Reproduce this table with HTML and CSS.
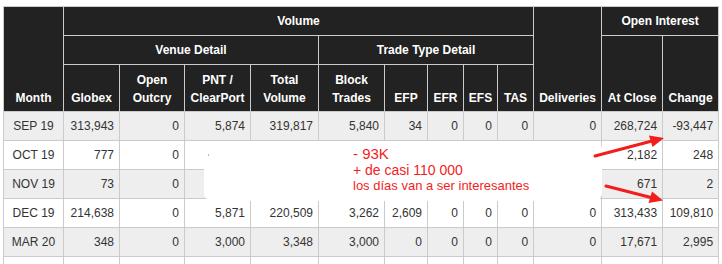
FILE: index.html
```html
<!DOCTYPE html>
<html lang="es">
<head>
<meta charset="utf-8">
<title>Volume / Open Interest</title>
<link rel="stylesheet" href="styles.css">
</head>
<body>
<div class="page">
  <table class="vol">
    <colgroup>
      <col class="c-month"><col class="c-globex"><col class="c-outcry"><col class="c-pnt"><col class="c-total">
      <col class="c-block"><col class="c-efp"><col class="c-efr"><col class="c-efs"><col class="c-tas">
      <col class="c-deliv"><col class="c-close"><col class="c-change">
    </colgroup>
    <thead>
      <tr class="h1">
        <th rowspan="3" class="bottom">Month</th>
        <th colspan="9">Volume</th>
        <th rowspan="3" class="bottom">Deliveries</th>
        <th colspan="2">Open Interest</th>
      </tr>
      <tr class="h2">
        <th colspan="4">Venue Detail</th>
        <th colspan="5">Trade Type Detail</th>
        <th rowspan="2" class="bottom">At Close</th>
        <th rowspan="2" class="bottom">Change</th>
      </tr>
      <tr class="h3">
        <th class="bottom">Globex</th>
        <th class="bottom">Open<br>Outcry</th>
        <th class="bottom">PNT /<br>ClearPort</th>
        <th class="bottom">Total<br>Volume</th>
        <th class="bottom">Block<br>Trades</th>
        <th class="bottom">EFP</th>
        <th class="bottom">EFR</th>
        <th class="bottom">EFS</th>
        <th class="bottom">TAS</th>
      </tr>
    </thead>
    <tbody>
      <tr class="alt">
        <td class="m">SEP 19</td><td>313,943</td><td>0</td><td>5,874</td><td>319,817</td><td>5,840</td><td>34</td><td>0</td><td>0</td><td>0</td><td>0</td><td>268,724</td><td>-93,447</td>
      </tr>
      <tr>
        <td class="m">OCT 19</td><td>777</td><td>0</td><td></td><td></td><td></td><td></td><td></td><td></td><td></td><td></td><td>2,182</td><td>248</td>
      </tr>
      <tr class="alt">
        <td class="m">NOV 19</td><td>73</td><td>0</td><td></td><td></td><td></td><td></td><td></td><td></td><td></td><td></td><td>671</td><td>2</td>
      </tr>
      <tr>
        <td class="m">DEC 19</td><td>214,638</td><td>0</td><td>5,871</td><td>220,509</td><td>3,262</td><td>2,609</td><td>0</td><td>0</td><td>0</td><td>0</td><td>313,433</td><td>109,810</td>
      </tr>
      <tr class="alt">
        <td class="m">MAR 20</td><td>348</td><td>0</td><td>3,000</td><td>3,348</td><td>3,000</td><td>0</td><td>0</td><td>0</td><td>0</td><td>0</td><td>17,671</td><td>2,995</td>
      </tr>
      <tr>
        <td class="m"></td><td></td><td></td><td></td><td></td><td></td><td></td><td></td><td></td><td></td><td></td><td></td><td></td>
      </tr>
    </tbody>
  </table>

  <div class="note">
    <span class="dot"></span>
    <div class="l1">- 93K</div>
    <div class="l2">+ de casi 110 000</div>
    <div class="l3">los días van a ser interesantes</div>
  </div>

  <svg class="arrows" width="722" height="264" viewBox="0 0 722 264" aria-hidden="true">
    <line x1="595" y1="156" x2="652" y2="141" stroke="#f21d1d" stroke-width="3" stroke-linecap="round"/>
    <polygon points="664,138 649,135.5 652.5,147" fill="#f21d1d"/>
    <line x1="606" y1="186" x2="651" y2="197.5" stroke="#f21d1d" stroke-width="3" stroke-linecap="round"/>
    <polygon points="663,200.5 652,191.5 648.5,203" fill="#f21d1d"/>
  </svg>
</div>
</body>
</html>
```

FILE: styles.css
```css
html, body {
  margin: 0;
  padding: 0;
  background: #fff;
}

.page {
  position: relative;
  width: 722px;
  height: 264px;
  overflow: hidden;
  padding: 6px 0 0 3px;
  box-sizing: border-box;
  font-family: "Liberation Sans", Arial, sans-serif;
}

.vol {
  border-collapse: collapse;
  table-layout: fixed;
  width: 716px;
  font-size: 12px;
  color: #333;
}

.c-month { width: 60px; }
.c-globex { width: 56px; }
.c-outcry { width: 65px; }
.c-pnt { width: 66px; }
.c-total { width: 68px; }
.c-block { width: 66px; }
.c-efp { width: 43px; }
.c-efr { width: 36px; }
.c-efs { width: 34px; }
.c-tas { width: 36px; }
.c-deliv { width: 68px; }
.c-close { width: 61px; }
.c-change { width: 56px; }

.vol th,
.vol td {
  border: 1px solid #cbcbcb;
  padding: 0 5px;
  white-space: nowrap;
}

.vol th {
  background: #222;
  color: #fff;
  font-weight: bold;
  text-align: center;
  vertical-align: middle;
  line-height: 18px;
  padding: 0 2px;
}

.vol th.bottom {
  vertical-align: bottom;
  padding-bottom: 4px;
}

.h1 { height: 29px; }
.h2 { height: 29px; }
.h3 { height: 47px; }

.vol tbody tr { height: 29px; }

.vol td {
  text-align: right;
  vertical-align: middle;
  background: #fff;
  line-height: 14px;
}

.vol tr.alt td { background: #eee; }

.vol td.m { text-align: center; }

.note {
  position: absolute;
  left: 204px;
  top: 141px;
  width: 398px;
  height: 60px;
  background: #fff;
  border-radius: 8px;
  padding: 5px 0 0 149px;
  box-sizing: border-box;
  color: #f21d1d;
  font-family: "Liberation Sans", Arial, sans-serif;
}

.note .l1 { font-size: 15px; line-height: 16px; }
.note .l2 { font-size: 14px; line-height: 16px; }
.note .l3 { font-size: 13px; line-height: 15px; }

.note .dot {
  position: absolute;
  left: 4px;
  top: 13px;
  width: 1px;
  height: 2px;
  background: #f9a0a0;
}

.arrows {
  position: absolute;
  left: 0;
  top: 0;
  pointer-events: none;
}
```
